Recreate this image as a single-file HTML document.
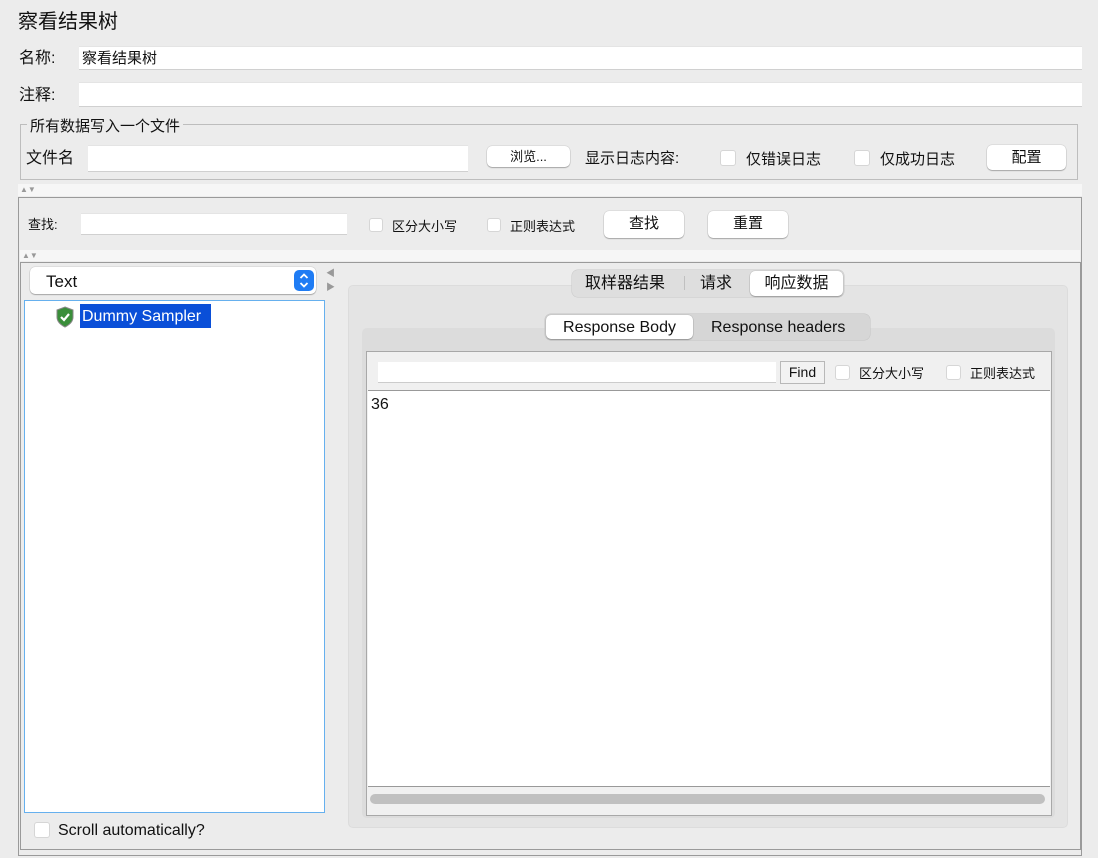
<!DOCTYPE html>
<html><head><meta charset="utf-8"><style>
*{box-sizing:border-box;margin:0;padding:0}
body{width:1098px;height:858px;background:#ececec;position:relative;overflow:hidden;font-family:"Liberation Sans","Noto Sans CJK SC",sans-serif;color:#111}
.a{position:absolute}
.t{position:absolute;white-space:nowrap;line-height:1}
.f{position:absolute;background:#fff;border-bottom:1px solid #d0d0d0;border-top:1px solid #e4e4e4}
.cb{position:absolute;width:16px;height:16px;background:#fff;border:1px solid #d6d6d6;border-radius:3px}
.btn{position:absolute;background:#fff;border-radius:5px;box-shadow:0 1px 1px rgba(0,0,0,.25),0 0 0 .5px rgba(0,0,0,.12);text-align:center;font-size:15px}
</style></head><body>
<div class="t" style="left:18px;top:12px;font-size:20px">察看结果树</div>
<div class="t" style="left:19px;top:51px;font-size:16px">名称:</div>
<div class="f" style="left:79px;top:46px;width:1003px;height:24px"></div>
<div class="t" style="left:82px;top:51px;font-size:15px">察看结果树</div>
<div class="t" style="left:19px;top:88px;font-size:16px">注释:</div>
<div class="f" style="left:79px;top:82px;width:1003px;height:25px"></div>

<div class="a" style="left:20px;top:124px;width:1058px;height:56px;border:1px solid #bdbdbd"></div>
<div class="t" style="left:27px;top:119px;font-size:15px;background:#ececec;padding:0 3px">所有数据写入一个文件</div>
<div class="t" style="left:26px;top:151px;font-size:16px">文件名</div>
<div class="f" style="left:88px;top:145px;width:380px;height:27px"></div>
<div class="btn" style="left:487px;top:146px;width:83px;height:21px;font-size:13px;line-height:21px">浏览...</div>
<div class="t" style="left:585px;top:151px;font-size:15px">显示日志内容:</div>
<div class="cb" style="left:720px;top:150px"></div>
<div class="t" style="left:746px;top:152px;font-size:15px">仅错误日志</div>
<div class="cb" style="left:854px;top:150px"></div>
<div class="t" style="left:880px;top:152px;font-size:15px">仅成功日志</div>
<div class="btn" style="left:987px;top:145px;width:79px;height:25px;line-height:25px">配置</div>

<div class="a" style="left:18px;top:184px;width:1064px;height:12px;background:#f6f6f6"></div>
<div class="t" style="left:20px;top:186px;font-size:8px;color:#999">▲▼</div>
<div class="a" style="left:18px;top:197px;width:1064px;height:659px;border:1px solid #9a9a9a"></div>
<div class="t" style="left:28px;top:218px;font-size:13px">查找:</div>
<div class="f" style="left:81px;top:213px;width:266px;height:22px"></div>
<div class="cb" style="left:369px;top:218px;width:14px;height:14px"></div>
<div class="t" style="left:392px;top:220px;font-size:13px">区分大小写</div>
<div class="cb" style="left:487px;top:218px;width:14px;height:14px"></div>
<div class="t" style="left:510px;top:220px;font-size:13px">正则表达式</div>
<div class="btn" style="left:604px;top:211px;width:80px;height:27px;line-height:26px">查找</div>
<div class="btn" style="left:708px;top:211px;width:80px;height:27px;line-height:26px">重置</div>

<div class="a" style="left:20px;top:250px;width:1060px;height:11px;background:#f6f6f6"></div>
<div class="t" style="left:22px;top:252px;font-size:8px;color:#999">▲▼</div>
<div class="a" style="left:20px;top:262px;width:1061px;height:588px;border:1px solid #9a9a9a"></div>

<div class="btn" style="left:30px;top:267px;width:286px;height:27px;border-radius:5px"></div>
<div class="t" style="left:46px;top:273px;font-size:17px">Text</div>
<div class="a" style="left:294px;top:270px;width:20px;height:21px;background:#1f7cf4;border-radius:5px"></div>
<svg class="a" style="left:294px;top:270px" width="20" height="21" viewBox="0 0 20 21"><path d="M6.5 8 L10 4.5 L13.5 8 M6.5 13 L10 16.5 L13.5 13" stroke="#fff" stroke-width="1.8" fill="none"/></svg>
<div class="t" style="left:326px;top:266px;font-size:9px;color:#999;line-height:14px">◀<br>▶</div>
<div class="a" style="left:24px;top:300px;width:301px;height:513px;background:#fff;border:1.5px solid #66b0ee"></div>
<svg class="a" style="left:55px;top:306px" width="20" height="22" viewBox="0 0 20 22"><path d="M10 1 L18 4 V11 C18 16 14 19 10 21 C6 19 2 16 2 11 V4 Z" fill="#3a8e3a" stroke="#888" stroke-width="1"/><path d="M6 11 L9 14 L14 8" stroke="#fff" stroke-width="2.2" fill="none"/></svg>
<div class="a" style="left:80px;top:304px;width:131px;height:24px;background:#0a4fd8"></div>
<div class="t" style="left:82px;top:309px;font-size:16px;color:#fff">Dummy Sampler</div>
<div class="cb" style="left:34px;top:822px"></div>
<div class="t" style="left:58px;top:823px;font-size:16px">Scroll automatically?</div>

<div class="a" style="left:348px;top:285px;width:720px;height:543px;background:#e4e4e4;border-radius:5px;border:1px solid #dcdcdc"></div>
<div class="a" style="left:572px;top:270px;width:272px;height:27px;background:#dedede;border-radius:6px;box-shadow:0 0 0 .5px #c8c8c8"></div>
<div class="t" style="left:585px;top:276px;font-size:16px">取样器结果</div>
<div class="a" style="left:684px;top:276px;width:1px;height:14px;background:#c0c0c0"></div>
<div class="t" style="left:700px;top:276px;font-size:16px">请求</div>
<div class="btn" style="left:750px;top:271px;width:93px;height:25px;line-height:26px;font-size:16px">响应数据</div>

<div class="a" style="left:362px;top:328px;width:693px;height:490px;background:#dcdcdc;border-radius:5px"></div>
<div class="a" style="left:545px;top:314px;width:325px;height:26px;background:#d6d6d6;border-radius:6px;box-shadow:0 0 0 .5px #c4c4c4"></div>
<div class="btn" style="left:546px;top:315px;width:147px;height:24px;line-height:25px;font-size:16px">Response Body</div>
<div class="t" style="left:711px;top:320px;font-size:16px">Response headers</div>

<div class="a" style="left:366px;top:351px;width:686px;height:465px;background:#f0f0f0;border:1px solid #a8a8a8"></div>
<div class="a" style="left:378px;top:362px;width:398px;height:21px;background:#fff;border-bottom:1px solid #ccc"></div>
<div class="a" style="left:780px;top:361px;width:45px;height:23px;background:#f2f2f2;border:1px solid #b8b8b8;font-size:14px;text-align:center;line-height:21px">Find</div>
<div class="cb" style="left:835px;top:365px;width:15px;height:15px"></div>
<div class="t" style="left:859px;top:367px;font-size:13px">区分大小写</div>
<div class="cb" style="left:946px;top:365px;width:15px;height:15px"></div>
<div class="t" style="left:970px;top:367px;font-size:13px">正则表达式</div>
<div class="a" style="left:368px;top:390px;width:682px;height:397px;background:#fff;border-top:1px solid #999;border-bottom:1px solid #999"></div>
<div class="t" style="left:371px;top:397px;font-size:16px">36</div>
<div class="a" style="left:370px;top:794px;width:675px;height:10px;background:#c0c0c0;border-radius:5px"></div>
</body></html>
